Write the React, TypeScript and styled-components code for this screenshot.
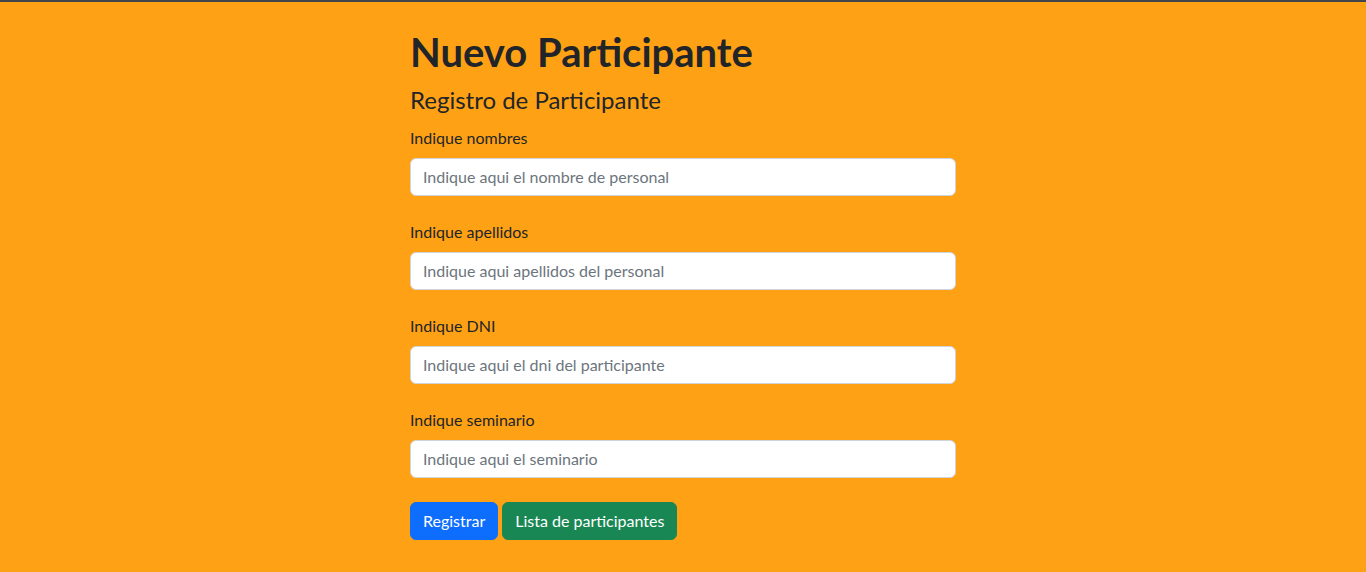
import React from "react";
import styled, { createGlobalStyle } from "styled-components";

const GlobalStyle = createGlobalStyle`
  html, body {
    margin: 0;
    padding: 0;
    background: #ffa114;
  }
  body {
    font-family: Lato, "Noto Sans", sans-serif;
    font-size: 16px;
    line-height: 1.5;
    color: #212529;
  }
  * { box-sizing: border-box; }
`;

const Page = styled.div`
  min-height: 572px;
  border-top: 2px solid #41464b;
  background: #ffa114;
`;

const Container = styled.div`
  max-width: 1140px;
  margin: 0 auto;
  padding: 0 12px;
`;

const Row = styled.div`
  display: flex;
  margin: 0 -12px;
`;

const Column = styled.div`
  flex: 0 0 50%;
  margin-left: 25%;
  padding: 0 12px;
`;

const Title = styled.h1`
  margin: 26px 0 10px;
  font-size: 40px;
  font-weight: 700;
  line-height: 1.2;
`;

const Subtitle = styled.h4`
  margin: 0 0 11px;
  font-size: 24px;
  font-weight: 400;
  line-height: 1.2;
`;

const Field = styled.div`
  margin-bottom: 24px;
`;

const Label = styled.label`
  display: block;
  margin-bottom: 8px;
  font-weight: 400;
`;

const Input = styled.input`
  display: block;
  width: 100%;
  height: 38px;
  padding: 6px 12px;
  font: inherit;
  color: #212529;
  background: #fff;
  border: 1px solid #ced4da;
  border-radius: 6px;
  outline: none;
  &::placeholder {
    color: #6c757d;
  }
`;

const Actions = styled.div`
  display: flex;
  gap: 4px;
`;

const Button = styled.button<{ $variant: "primary" | "success" }>`
  height: 38px;
  padding: 6px 12px;
  font: inherit;
  color: #fff;
  border: 1px solid ${(p) => (p.$variant === "primary" ? "#0d6efd" : "#198754")};
  background: ${(p) => (p.$variant === "primary" ? "#0d6efd" : "#198754")};
  border-radius: 6px;
  cursor: pointer;
`;

const fields = [
  { id: "nombres", label: "Indique nombres", placeholder: "Indique aqui el nombre de personal" },
  { id: "apellidos", label: "Indique apellidos", placeholder: "Indique aqui apellidos del personal" },
  { id: "dni", label: "Indique DNI", placeholder: "Indique aqui el dni del participante" },
  { id: "seminario", label: "Indique seminario", placeholder: "Indique aqui el seminario" },
];

export default function App() {
  return (
    <Page>
      <GlobalStyle />
      <Container>
        <Row>
          <Column>
            <Title>Nuevo Participante</Title>
            <Subtitle>Registro de Participante</Subtitle>
            <form onSubmit={(e) => e.preventDefault()}>
              {fields.map((f) => (
                <Field key={f.id}>
                  <Label htmlFor={f.id}>{f.label}</Label>
                  <Input id={f.id} type="text" placeholder={f.placeholder} />
                </Field>
              ))}
              <Actions>
                <Button type="submit" $variant="primary">Registrar</Button>
                <Button type="button" $variant="success">Lista de participantes</Button>
              </Actions>
            </form>
          </Column>
        </Row>
      </Container>
    </Page>
  );
}
